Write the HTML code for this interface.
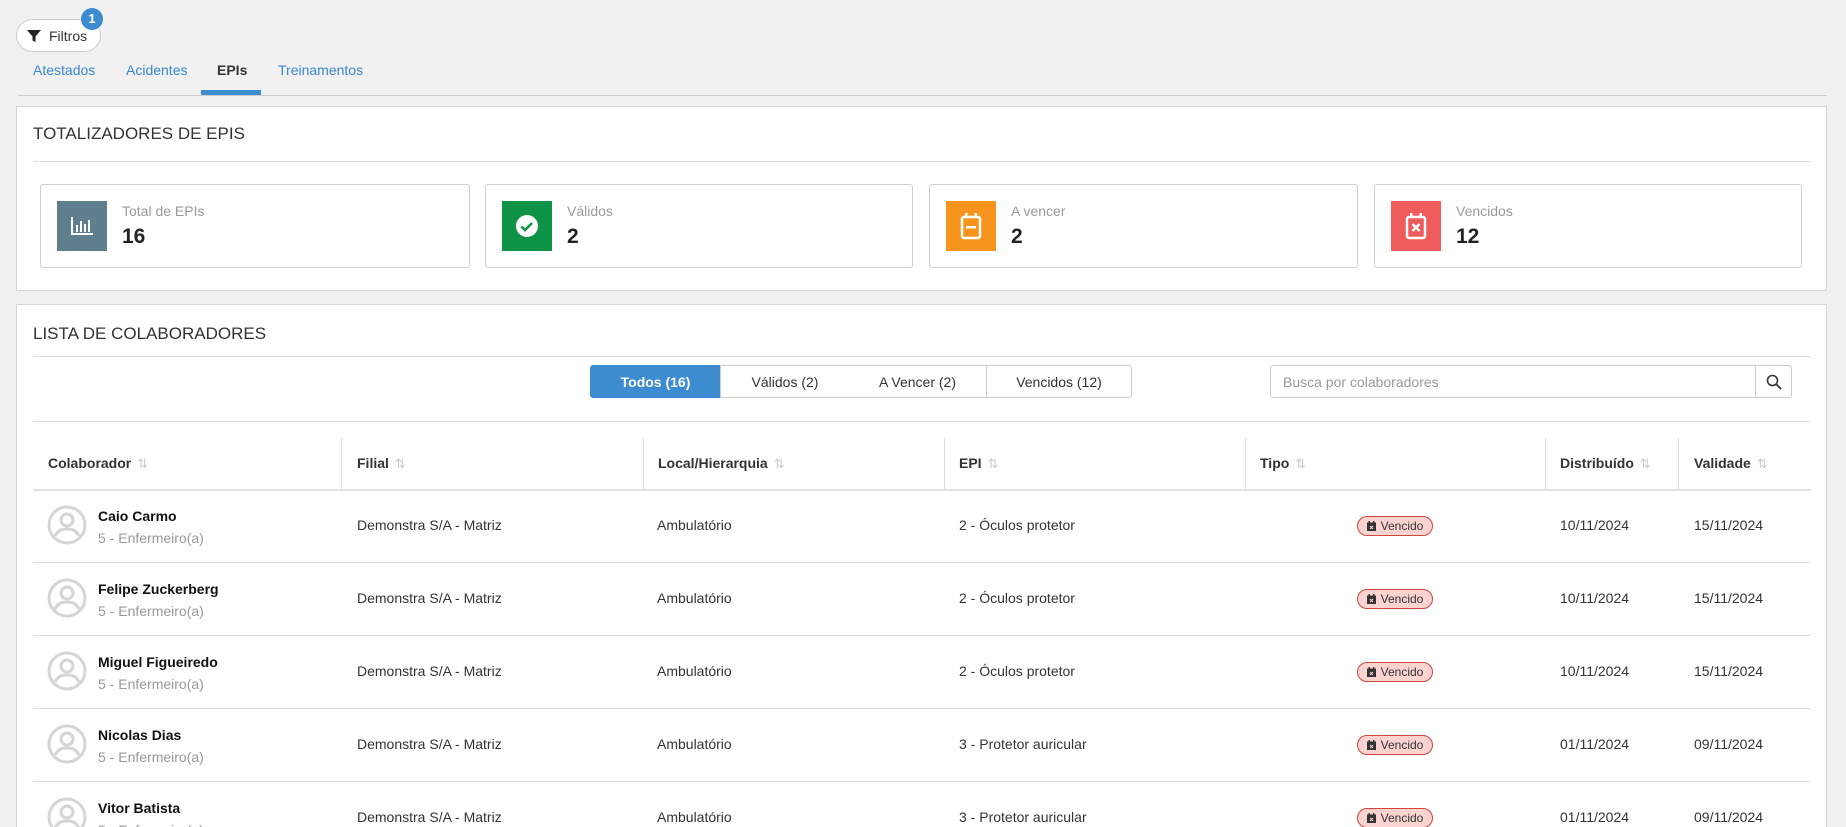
<!DOCTYPE html>
<html style="height:827px;overflow:hidden"><head><meta charset="utf-8"><style>
*{box-sizing:border-box;margin:0;padding:0}
body{width:1846px;height:827px;overflow:hidden;background:#f1f1f1;font-family:"Liberation Sans",Arial,sans-serif;color:#333;position:relative;font-size:14px}
.a{position:absolute}
.tab{position:absolute;top:62px;color:#3a87cd;font-size:14px}
.panel{position:absolute;left:16px;width:1811px;background:#fff;border:1px solid #d6d6d6}
.card{position:absolute;top:184px;height:84px;border:1px solid #cfcfcf;border-radius:3px;background:#fff}
.ic{position:absolute;left:16px;top:16px;width:50px;height:50px;display:flex;align-items:center;justify-content:center}
.lbl{position:absolute;left:81px;top:18px;color:#999;font-size:14px}
.val{position:absolute;left:81px;top:40px;font-size:21px;font-weight:bold;color:#222}
.seg{position:absolute;top:365px;height:33px;border:1px solid #ccc;display:flex;align-items:center;justify-content:center;font-size:14px;color:#333;background:#fff}
.th{position:absolute;top:455px;font-weight:bold;font-size:14px;color:#333}
.sep{position:absolute;top:438px;height:51px;width:1px;background:#ddd}
.sort{color:#ccc;font-weight:normal;margin-left:6px;font-size:13px}
.hl{position:absolute;left:33px;width:1778px;height:1px;background:#ddd}
.cell{position:absolute;font-size:14px;color:#333}
.badge{position:absolute;left:1357px;width:76px;height:20px;border:1px solid #d0453c;border-radius:10px;background:#fbd3d1;font-size:12px;color:#333;display:flex;align-items:center;justify-content:center;gap:5px}
</style></head><body>
<div class="a" style="left:16px;top:19px;width:85px;height:33px;border:1px solid #ccc;border-radius:17px;background:#fff;font-size:14px;display:flex;align-items:center;padding-left:10px">
<svg width="14" height="14" viewBox="0 0 14 14"><path d="M0 1h14L8.5 7.5V13L5.5 11.5V7.5Z" fill="#222"/></svg><span style="margin-left:8px">Filtros</span></div>
<div class="a" style="left:81px;top:8px;width:22px;height:22px;border-radius:50%;background:#3d8bd1;color:#fff;font-size:13px;font-weight:bold;text-align:center;line-height:22px">1</div>
<div class="tab" style="left:33px">Atestados</div>
<div class="tab" style="left:126px">Acidentes</div>
<div class="tab" style="left:217px;color:#333;font-weight:bold">EPIs</div>
<div class="tab" style="left:278px">Treinamentos</div>
<div class="a" style="left:18px;top:95px;width:1809px;height:1px;background:#ccc"></div>
<div class="a" style="left:201px;top:90px;width:60px;height:5px;background:#3d8bd1"></div>

<div class="panel" style="top:106px;height:185px"></div>
<div class="a" style="left:33px;top:124px;font-size:17px;color:#333">TOTALIZADORES DE EPIS</div>
<div class="a" style="left:33px;top:161px;width:1778px;height:1px;background:#ddd"></div>

<div class="card" style="left:40px;width:430px"><div class="ic" style="background:#5f7f8f"><svg width="24" height="20" viewBox="0 0 24 20" fill="#fff"><rect x="1" y="1" width="2" height="18"/><rect x="1" y="17" width="22" height="2"/><rect x="6" y="9" width="2" height="7"/><rect x="10" y="5" width="2" height="11"/><rect x="14" y="8" width="2" height="8"/><rect x="18" y="4" width="2" height="12"/></svg></div><div class="lbl">Total de EPIs</div><div class="val">16</div></div>
<div class="card" style="left:485px;width:428px"><div class="ic" style="background:#0f9347"><svg width="24" height="24" viewBox="0 0 24 24"><circle cx="12" cy="12" r="11" fill="#fff"/><path d="M6.5 12.5l3.5 3.5 7-7" stroke="#0f9347" stroke-width="2.6" fill="none"/></svg></div><div class="lbl">Válidos</div><div class="val">2</div></div>
<div class="card" style="left:929px;width:429px"><div class="ic" style="background:#f7941d"><svg width="22" height="28" viewBox="0 0 22 28"><rect x="2" y="5" width="18" height="21" rx="2" stroke="#fff" stroke-width="2.5" fill="none"/><rect x="5" y="1" width="2.5" height="5" fill="#fff"/><rect x="14.5" y="1" width="2.5" height="5" fill="#fff"/><rect x="6" y="14" width="10" height="2.5" fill="#fff"/></svg></div><div class="lbl">A vencer</div><div class="val">2</div></div>
<div class="card" style="left:1374px;width:428px"><div class="ic" style="background:#f05b5b"><svg width="22" height="28" viewBox="0 0 22 28"><rect x="2" y="5" width="18" height="21" rx="2" stroke="#fff" stroke-width="2.5" fill="none"/><rect x="5" y="1" width="2.5" height="5" fill="#fff"/><rect x="14.5" y="1" width="2.5" height="5" fill="#fff"/><path d="M7.5 12l7 7M14.5 12l-7 7" stroke="#fff" stroke-width="2.5"/></svg></div><div class="lbl">Vencidos</div><div class="val">12</div></div>

<div class="panel" style="top:304px;height:540px"></div>
<div class="a" style="left:33px;top:324px;font-size:17px;color:#333">LISTA DE COLABORADORES</div>
<div class="a" style="left:33px;top:356px;width:1778px;height:1px;background:#ddd"></div>

<div class="seg" style="left:590px;width:131px;background:#3d8bd1;border-color:#3d8bd1;color:#fff;font-weight:bold;border-radius:3px 0 0 3px">Todos (16)</div>
<div class="seg" style="left:720px;width:130px">Válidos (2)</div>
<div class="seg" style="left:849px;width:138px;border-left:none">A Vencer (2)</div>
<div class="seg" style="left:986px;width:146px;border-radius:0 3px 3px 0">Vencidos (12)</div>
<div class="a" style="left:1270px;top:365px;width:486px;height:33px;border:1px solid #ccc;border-radius:3px 0 0 3px;color:#999;padding:8px 12px;font-size:14px">Busca por colaboradores</div>
<div class="a" style="left:1755px;top:365px;width:37px;height:33px;border:1px solid #ccc;border-radius:0 3px 3px 0;display:flex;align-items:center;justify-content:center"><svg width="16" height="16" viewBox="0 0 16 16"><circle cx="6.5" cy="6.5" r="5" stroke="#333" stroke-width="1.6" fill="none"/><path d="M10.3 10.3L15 15" stroke="#333" stroke-width="1.8"/></svg></div>
<div class="hl" style="top:421px"></div>

<div class="th" style="left:48px">Colaborador<span class="sort">⇅</span></div>
<div class="sep" style="left:341px"></div><div class="th" style="left:357px">Filial<span class="sort">⇅</span></div>
<div class="sep" style="left:643px"></div><div class="th" style="left:658px">Local/Hierarquia<span class="sort">⇅</span></div>
<div class="sep" style="left:944px"></div><div class="th" style="left:959px">EPI<span class="sort">⇅</span></div>
<div class="sep" style="left:1245px"></div><div class="th" style="left:1260px">Tipo<span class="sort">⇅</span></div>
<div class="sep" style="left:1545px"></div><div class="th" style="left:1560px">Distribuído<span class="sort">⇅</span></div>
<div class="sep" style="left:1678px"></div><div class="th" style="left:1694px">Validade<span class="sort">⇅</span></div>
<div class="hl" style="top:489px;height:2px;background:#e2e2e2"></div>

<div id="rows"></div>
<script>
var d=[["Caio Carmo","2 - Óculos protetor","10/11/2024","15/11/2024"],["Felipe Zuckerberg","2 - Óculos protetor","10/11/2024","15/11/2024"],["Miguel Figueiredo","2 - Óculos protetor","10/11/2024","15/11/2024"],["Nicolas Dias","3 - Protetor auricular","01/11/2024","09/11/2024"],["Vitor Batista","3 - Protetor auricular","01/11/2024","09/11/2024"]];
var h="";d.forEach(function(r,i){var t=491+i*73,c=t+34;
h+='<svg class="a" style="left:47px;top:'+(c-20)+'px" width="40" height="40" viewBox="0 0 40 40"><circle cx="20" cy="20" r="18" stroke="#d5d5d5" stroke-width="3" fill="none"/><circle cx="20" cy="15" r="6" stroke="#d5d5d5" stroke-width="3" fill="none"/><path d="M8 31c3-6 7-7 12-7s9 1 12 7" stroke="#d5d5d5" stroke-width="3" fill="none"/></svg>';
h+='<div class="cell" style="left:98px;top:'+(c-17)+'px;font-weight:bold;color:#111">'+r[0]+'</div>';
h+='<div class="cell" style="left:98px;top:'+(c+5)+'px;color:#999">5 - Enfermeiro(a)</div>';
h+='<div class="cell" style="left:357px;top:'+(c-8)+'px">Demonstra S/A - Matriz</div>';
h+='<div class="cell" style="left:657px;top:'+(c-8)+'px">Ambulatório</div>';
h+='<div class="cell" style="left:959px;top:'+(c-8)+'px">'+r[1]+'</div>';
h+='<div class="badge" style="top:'+(c-9)+'px"><svg width="9" height="10" viewBox="0 0 9 10"><rect x="0" y="1.5" width="9" height="8.5" fill="#333"/><rect x="1.5" y="0" width="1.5" height="2" fill="#333"/><rect x="6" y="0" width="1.5" height="2" fill="#333"/><path d="M3 5l3 3M6 5l-3 3" stroke="#fbd3d1" stroke-width="1"/></svg>Vencido</div>';
h+='<div class="cell" style="left:1560px;top:'+(c-8)+'px">'+r[2]+'</div>';
h+='<div class="cell" style="left:1694px;top:'+(c-8)+'px">'+r[3]+'</div>';
if(i<4)h+='<div class="hl" style="top:'+(t+71)+'px"></div>';});
document.getElementById("rows").innerHTML=h;
</script>
</body></html>
